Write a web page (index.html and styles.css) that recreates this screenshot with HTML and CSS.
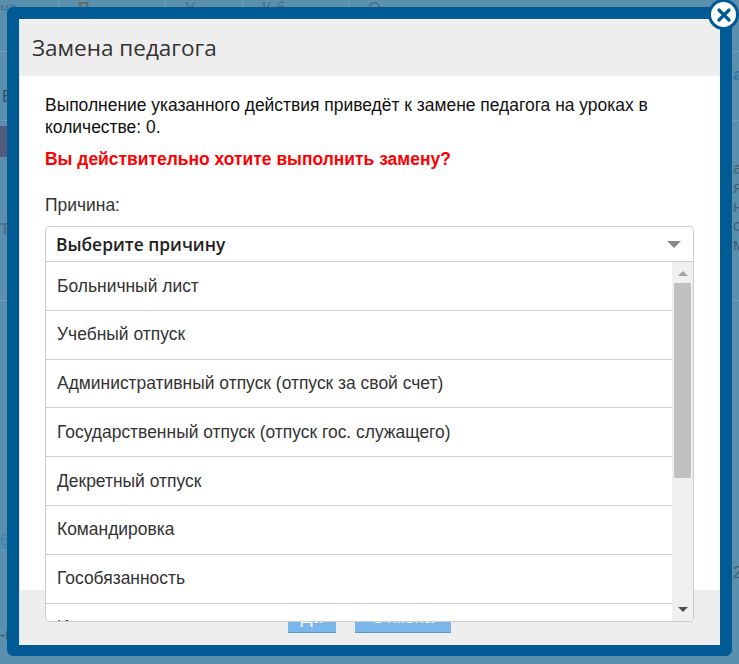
FILE: index.html
```html
<!DOCTYPE html>
<html lang="ru">
<head>
    <meta charset="UTF-8">
    <title>Замена педагога</title>
    <link rel="stylesheet" href="styles.css">
</head>
<body>
    <!-- page behind the overlay -->
    <div class="page">
        <div class="page-top">
            <span class="cell cell-a">не</span>
            <span class="cell cell-b">П</span>
            <span class="cell cell-c">У</span>
            <span class="cell cell-d">К б</span>
            <span class="cell cell-e">О</span>
        </div>
        <span class="ghost ghost-v">В</span>
        <span class="ghost-block"></span>
        <span class="ghost ghost-t">Т</span>
        <span class="ghost ghost-six">6</span>
        <span class="ghost ghost-c">-ц</span>
        <span class="ghost ghost-a">а</span>
        <div class="ghost ghost-side">аг<br>я<br>н<br>с<br>м'</div>
        <span class="ghost ghost-two">2</span>
        <span class="page-line line-1"></span>
        <span class="page-line line-2"></span>
        <span class="page-line line-3"></span>
    </div>

    <div class="modal">
        <button class="modal-close" aria-label="Закрыть">
            <svg width="16" height="16" viewBox="0 0 16 16"><path d="M3 3l10 10M13 3L3 13" stroke="#005b94" stroke-width="3.2" fill="none" stroke-linecap="round"/></svg>
        </button>
        <div class="modal-inner">
            <div class="modal-head">Замена педагога</div>
            <div class="modal-body">
                <p class="msg">Выполнение указанного действия приведёт к замене педагога на уроках в количестве: 0.</p>
                <p class="warn">Вы действительно хотите выполнить замену?</p>
                <label class="reason-label">Причина:</label>
                <div class="select">
                    <div class="select-head">
                        <span>Выберите причину</span>
                        <i class="caret"></i>
                    </div>
                    <div class="select-drop">
                        <ul class="options">
                            <li class="first">Больничный лист</li>
                            <li>Учебный отпуск</li>
                            <li>Административный отпуск (отпуск за свой счет)</li>
                            <li>Государственный отпуск (отпуск гос. служащего)</li>
                            <li>Декретный отпуск</li>
                            <li>Командировка</li>
                            <li>Гособязанность</li>
                            <li>Иное</li>
                        </ul>
                        <div class="scrollbar">
                            <i class="arrow-up"></i>
                            <div class="thumb"></div>
                            <i class="arrow-down"></i>
                        </div>
                    </div>
                </div>
            </div>
            <div class="modal-foot">
                <button class="btn btn-yes">Да</button>
                <button class="btn btn-no">Отмена</button>
            </div>
        </div>
    </div>
</body>
</html>
```

FILE: styles.css
```css
*{
    margin: 0;
    padding: 0;
    box-sizing: border-box;
}

html, body{
    height: 100%;
    overflow: hidden;
}

body{
    background-color: #5b8fae;
    font-family: "Liberation Sans", Arial, sans-serif;
    font-size: 17.45px;
    color: #222;
}

/* page behind the overlay */
.page{
    position: absolute;
    top: 0;
    left: 0;
    width: 739px;
    height: 664px;
    color: #3f7395;
}

.page-top{
    display: flex;
    height: 10px;
    overflow: hidden;
    font-size: 16px;
    line-height: 18px;
}

.cell{
    height: 10px;
    padding-left: 19px;
    border-right: 1px solid #6f9db8;
    color: #44708c;
}

.cell-a{ width: 59px; padding-left: 0; }
.cell-b{ width: 107px; font-weight: bold; color: #6b6b5e; }
.cell-c{ width: 77px; }
.cell-d{ width: 106px; }
.cell-e{ width: 60px; border-right: 0; }

.ghost{
    position: absolute;
    line-height: 18px;
    font-size: 16px;
}

.ghost-v{ left: 2px; top: 88px; color: #2f5068; }
.ghost-t{ left: 0; top: 221px; font-weight: bold; color: #4a6f88; }
.ghost-six{ left: 0; top: 532px; text-decoration: underline; color: #3b82b0; }
.ghost-c{ left: 0; top: 626px; color: #2f5068; }
.ghost-a{ left: 733px; top: 66px; font-size: 17px; font-weight: bold; color: #2f7aa8; }
.ghost-side{ left: 733px; top: 159px; line-height: 19px; color: #3f6078; }
.ghost-two{ left: 733px; top: 564px; color: #3f6078; }

.ghost-block{
    position: absolute;
    left: 0;
    top: 126px;
    width: 8px;
    height: 31px;
    background-color: #4f5c7c;
}

.page-line{
    position: absolute;
    left: 0;
    width: 739px;
    height: 1px;
    background-color: #6f9db8;
}

.line-1{ top: 51px; }
.line-2{ top: 120px; }
.line-3{ top: 300px; }

/* modal */
.modal{
    position: absolute;
    top: 7px;
    left: 7px;
    width: 725px;
    height: 649px;
    border: 12px solid #005b94;
    border-bottom-width: 11px;
    border-radius: 6px;
    background-color: #fff;
}

.modal-inner{
    display: flex;
    flex-direction: column;
    height: 100%;
    border-top: 1px solid #fff;
    border-left: 1px solid #d5e6f1;
}

.modal-close{
    position: absolute;
    top: -20px;
    right: -19px;
    display: flex;
    align-items: center;
    justify-content: center;
    width: 31px;
    height: 31px;
    border: 3px solid #005b94;
    border-radius: 50%;
    background-color: #fff;
    z-index: 3;
}

.modal-head{
    height: 56px;
    padding-left: 12px;
    background-color: #eee;
    font-family: "Open Sans", sans-serif;
    font-size: 22.5px;
    line-height: 56px;
    color: #333;
}

.modal-body{
    flex: 1;
    padding: 18px 26px 0 25px;
}

.msg{
    line-height: 22px;
    color: #111;
}

.warn{
    margin-top: 10px;
    font-weight: bold;
    line-height: 22px;
    color: #f00;
}

.reason-label{
    display: block;
    margin-top: 24px;
    line-height: 22px;
    color: #333;
}

/* select with opened list */
.select{
    position: relative;
    margin-top: 10px;
}

.select-head{
    display: flex;
    align-items: center;
    justify-content: space-between;
    height: 37px;
    padding: 0 12px 2px 10px;
    border: 1px solid #ccc;
    border-radius: 4px 4px 0 0;
    background-color: #fff;
    font-family: "Open Sans", sans-serif;
    font-size: 17.4px;
    font-weight: 600;
    color: #222;
}

.caret{
    width: 0;
    height: 0;
    margin-top: 2px;
    border-left: 7px solid transparent;
    border-right: 7px solid transparent;
    border-top: 7px solid #888;
}

.select-drop{
    position: absolute;
    top: 35px;
    left: 0;
    right: 0;
    display: flex;
    height: 361px;
    border: 1px solid #ccc;
    border-radius: 0 0 4px 4px;
    background-color: #fff;
    overflow: hidden;
    z-index: 2;
}

.options{
    flex: 1;
    list-style: none;
    overflow: hidden;
}

.options li{
    height: 48.8px;
    padding: 12.4px 11px 0;
    border-bottom: 1px solid #ccc;
    line-height: 22px;
    color: #333;
}

.options .first{
    padding-top: 13px;
}

.scrollbar{
    display: flex;
    flex-direction: column;
    align-items: center;
    width: 21px;
    background-color: #f0f0f0;
}

.arrow-up{
    width: 0;
    height: 0;
    margin-top: 9px;
    border-left: 5px solid transparent;
    border-right: 5px solid transparent;
    border-bottom: 5px solid #a3a3a3;
}

.thumb{
    width: 17px;
    height: 195px;
    margin-top: 7px;
    background-color: #c1c1c1;
}

.arrow-down{
    width: 0;
    height: 0;
    margin-top: auto;
    margin-bottom: 9px;
    border-left: 5px solid transparent;
    border-right: 5px solid transparent;
    border-top: 5px solid #505050;
}

.modal-foot{
    display: flex;
    justify-content: center;
    gap: 19px;
    height: 55px;
    padding-top: 12px;
    background-color: #eee;
}

.btn{
    height: 31px;
    border: 0;
    border-bottom: 1px solid #5a9bd5;
    background-color: #7ab6ea;
    font-family: "Liberation Sans", Arial, sans-serif;
    font-size: 17.45px;
    color: #fff;
}

.btn-yes{ width: 48px; margin-left: -2px; }
.btn-no{ width: 96px; }
```
